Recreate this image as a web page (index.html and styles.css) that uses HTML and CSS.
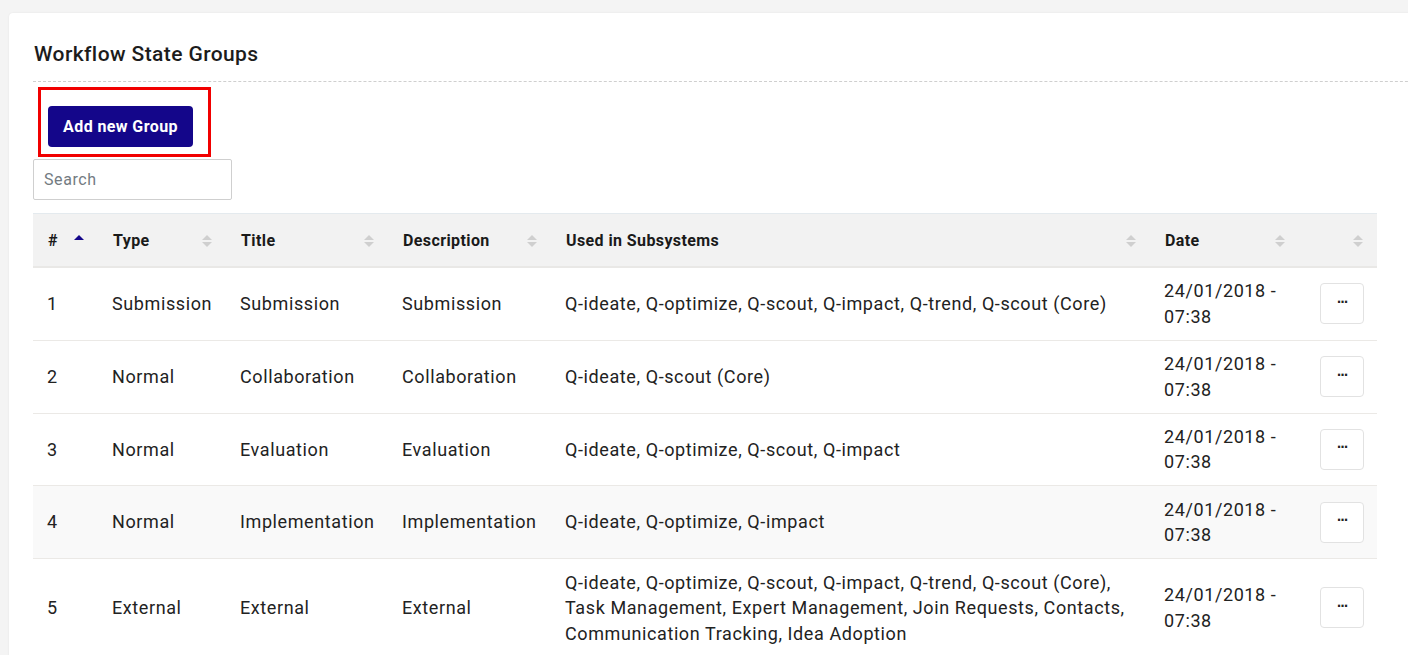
FILE: index.html
```html
<!DOCTYPE html>
<html>
<head>
<meta charset="utf-8">
<link rel="stylesheet" href="styles.css">
</head>
<body>
<div class="page">
  <div class="card">
    <div class="card-header">
      <h2 class="title">Workflow State Groups</h2>
    </div>
    <div class="highlight">
      <button class="btn-primary">Add new Group</button>
    </div>
    <input class="search" type="text" placeholder="Search">
    <table class="grid">
      <colgroup>
        <col style="width:65px"><col style="width:128px"><col style="width:162px"><col style="width:163px"><col style="width:599px"><col style="width:149px"><col style="width:78px">
      </colgroup>
      <thead>
        <tr>
          <th><div class="th-in"><span>#</span><span class="sort-asc"></span></div></th>
          <th><div class="th-in"><span>Type</span><span class="sort"><i class="up"></i><i class="down"></i></span></div></th>
          <th><div class="th-in"><span>Title</span><span class="sort"><i class="up"></i><i class="down"></i></span></div></th>
          <th><div class="th-in"><span>Description</span><span class="sort"><i class="up"></i><i class="down"></i></span></div></th>
          <th><div class="th-in"><span>Used in Subsystems</span><span class="sort"><i class="up"></i><i class="down"></i></span></div></th>
          <th><div class="th-in"><span>Date</span><span class="sort"><i class="up"></i><i class="down"></i></span></div></th>
          <th><div class="th-in"><span></span><span class="sort"><i class="up"></i><i class="down"></i></span></div></th>
        </tr>
      </thead>
      <tbody>
        <tr>
          <td>1</td><td>Submission</td><td>Submission</td><td>Submission</td>
          <td>Q-ideate, Q-optimize, Q-scout, Q-impact, Q-trend, Q-scout (Core)</td>
          <td>24/01/2018 - 07:38</td>
          <td class="act"><button class="dots">&middot;&middot;&middot;</button></td>
        </tr>
        <tr>
          <td>2</td><td>Normal</td><td>Collaboration</td><td>Collaboration</td>
          <td>Q-ideate, Q-scout (Core)</td>
          <td>24/01/2018 - 07:38</td>
          <td class="act"><button class="dots">&middot;&middot;&middot;</button></td>
        </tr>
        <tr>
          <td>3</td><td>Normal</td><td>Evaluation</td><td>Evaluation</td>
          <td>Q-ideate, Q-optimize, Q-scout, Q-impact</td>
          <td>24/01/2018 - 07:38</td>
          <td class="act"><button class="dots">&middot;&middot;&middot;</button></td>
        </tr>
        <tr class="hover">
          <td>4</td><td>Normal</td><td>Implementation</td><td>Implementation</td>
          <td>Q-ideate, Q-optimize, Q-impact</td>
          <td>24/01/2018 - 07:38</td>
          <td class="act"><button class="dots">&middot;&middot;&middot;</button></td>
        </tr>
        <tr>
          <td>5</td><td>External</td><td>External</td><td>External</td>
          <td>Q-ideate, Q-optimize, Q-scout, Q-impact, Q-trend, Q-scout (Core), Task Management, Expert Management, Join Requests, Contacts, Communication Tracking, Idea Adoption</td>
          <td>24/01/2018 - 07:38</td>
          <td class="act"><button class="dots">&middot;&middot;&middot;</button></td>
        </tr>
      </tbody>
    </table>
  </div>
</div>
</body>
</html>
```

FILE: styles.css
```css
html, body {
  margin: 0;
  padding: 0;
  overflow: hidden;
  background: #f4f4f4;
  font-family: Roboto, "Liberation Sans", sans-serif;
  color: #212529;
}

.page {
  padding: 13px 0 0 9px;
  width: 1500px;
}

.card {
  background: #fff;
  border-radius: 4px;
  box-shadow: 0 0 2px rgba(0,0,0,0.08);
  width: 1440px;
  padding: 0 0 40px 24px;
  min-height: 700px;
}

.card-header {
  padding: 28px 0 14px 1px;
  border-bottom: 1px dashed #cfcfcf;
}

.title {
  margin: 0;
  font-size: 21px;
  font-weight: 500;
  line-height: 26px;
  letter-spacing: 0.4px;
  color: #1c1c1c;
}

.highlight {
  display: inline-block;
  margin: 5px 0 0 5px;
  border: 3px solid #f10000;
  padding: 16px 15px 7px 7px;
  line-height: 0;
}

.btn-primary {
  background: #14068a;
  color: #fff;
  border: none;
  border-radius: 4px;
  font-family: Roboto, "Liberation Sans", sans-serif;
  font-weight: 700;
  font-size: 16px;
  letter-spacing: 0.4px;
  height: 41px;
  width: 145px;
  padding: 0;
}

.search {
  display: block;
  box-sizing: border-box;
  margin-top: 2px;
  width: 199px;
  height: 41px;
  border: 1px solid #cfcfcf;
  border-radius: 2px;
  padding: 0 10px;
  font-family: Roboto, "Liberation Sans", sans-serif;
  font-size: 16px;
  letter-spacing: 0.6px;
  color: #333;
}
.search::placeholder {
  color: #737b82;
}

.grid {
  margin-top: 13px;
  width: 1344px;
  table-layout: fixed;
  border-collapse: collapse;
  font-size: 18px;
  letter-spacing: 0.6px;
  line-height: 25.5px;
}

.grid thead th {
  background: #f2f2f2;
  border-top: 1px solid #e4eaee;
  border-bottom: 2px solid #e9e8e6;
  padding: 15px 14px 13px 15px;
  text-align: left;
  font-size: 16px;
  font-weight: 700;
  letter-spacing: 0.4px;
  line-height: 24px;
  color: #1a1a1a;
}

.th-in {
  display: flex;
  align-items: center;
  justify-content: space-between;
}

.sort {
  display: flex;
  flex-direction: column;
  gap: 2px;
  width: 10px;
  align-items: center;
}
.sort i {
  display: block;
  width: 0;
  height: 0;
  border-left: 5px solid transparent;
  border-right: 5px solid transparent;
}
.sort .up { border-bottom: 5px solid #cfcfcf; }
.sort .down { border-top: 5px solid #cfcfcf; }

.sort-asc {
  display: block;
  width: 0;
  height: 0;
  border-left: 5px solid transparent;
  border-right: 5px solid transparent;
  border-bottom: 5px solid #14068a;
  margin-bottom: 7px;
}

.grid tbody td {
  padding: 10.4px 8px 10.4px 14px;
  border-bottom: 1px solid #ebe9e6;
  vertical-align: middle;
  color: #222;
}

.grid tbody tr.hover td {
  background: #f9f9f9;
}

.grid td.act {
  text-align: right;
  padding-right: 13px;
}

.dots {
  width: 44px;
  height: 41px;
  background: #fff;
  border: 1px solid #e2e2e2;
  border-radius: 4px;
  font-family: "DejaVu Sans", sans-serif;
  font-weight: 700;
  font-size: 12px;
  letter-spacing: -1px;
  color: #222;
  padding: 0 0 4px 0;
}
```
